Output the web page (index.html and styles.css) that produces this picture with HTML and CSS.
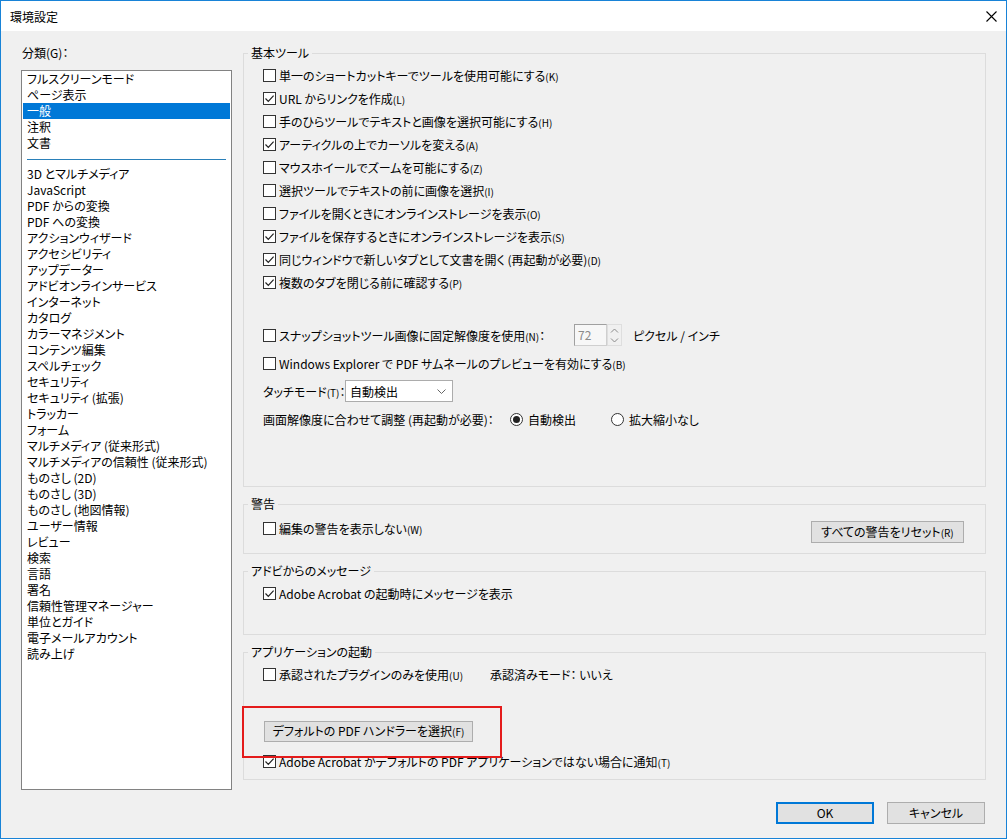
FILE: index.html
```html
<!DOCTYPE html>
<html lang="ja">
<head>
    <meta charset="UTF-8">
    <title>環境設定</title>
    <link rel="stylesheet" href="styles.css">
</head>
<body>
<div class="window">
    <div class="titlebar">
        <span class="title">環境設定</span>
        <svg class="close" width="11" height="11" viewBox="0 0 11 11"><path d="M0.5 0.5 L10.5 10.5 M10.5 0.5 L0.5 10.5" stroke="#000" stroke-width="1.1"/></svg>
    </div>
    <div class="content">
        <div class="sidebar">
            <div class="side-label">分類(G)：</div>
            <div class="listbox">
                <div class="item">フルスクリーンモード</div>
                <div class="item">ページ表示</div>
                <div class="item selected">一般</div>
                <div class="item">注釈</div>
                <div class="item">文書</div>
                <div class="separator"></div>
                <div class="item">3D とマルチメディア</div>
                <div class="item">JavaScript</div>
                <div class="item">PDF からの変換</div>
                <div class="item">PDF への変換</div>
                <div class="item">アクションウィザード</div>
                <div class="item">アクセシビリティ</div>
                <div class="item">アップデーター</div>
                <div class="item">アドビオンラインサービス</div>
                <div class="item">インターネット</div>
                <div class="item">カタログ</div>
                <div class="item">カラーマネジメント</div>
                <div class="item">コンテンツ編集</div>
                <div class="item">スペルチェック</div>
                <div class="item">セキュリティ</div>
                <div class="item">セキュリティ (拡張)</div>
                <div class="item">トラッカー</div>
                <div class="item">フォーム</div>
                <div class="item">マルチメディア (従来形式)</div>
                <div class="item">マルチメディアの信頼性 (従来形式)</div>
                <div class="item">ものさし (2D)</div>
                <div class="item">ものさし (3D)</div>
                <div class="item">ものさし (地図情報)</div>
                <div class="item">ユーザー情報</div>
                <div class="item">レビュー</div>
                <div class="item">検索</div>
                <div class="item">言語</div>
                <div class="item">署名</div>
                <div class="item">信頼性管理マネージャー</div>
                <div class="item">単位とガイド</div>
                <div class="item">電子メールアカウント</div>
                <div class="item">読み上げ</div>
            </div>
        </div>

        <div class="main">
            <div class="group group-basic">
                <div class="group-title">基本ツール</div>
                <div class="rows">
                    <div class="row"><span class="check"></span><span>単一のショートカットキーでツールを使用可能にする<small>(K)</small></span></div>
                    <div class="row"><span class="check on"><svg viewBox="0 0 11 11"><path d="M1.5 5.5 L4.3 8.4 L9.6 2.6" fill="none" stroke="#222" stroke-width="1.2"/></svg></span><span>URL からリンクを作成<small>(L)</small></span></div>
                    <div class="row"><span class="check"></span><span>手のひらツールでテキストと画像を選択可能にする<small>(H)</small></span></div>
                    <div class="row"><span class="check on"><svg viewBox="0 0 11 11"><path d="M1.5 5.5 L4.3 8.4 L9.6 2.6" fill="none" stroke="#222" stroke-width="1.2"/></svg></span><span>アーティクルの上でカーソルを変える<small>(A)</small></span></div>
                    <div class="row"><span class="check"></span><span>マウスホイールでズームを可能にする<small>(Z)</small></span></div>
                    <div class="row"><span class="check"></span><span>選択ツールでテキストの前に画像を選択<small>(I)</small></span></div>
                    <div class="row"><span class="check"></span><span>ファイルを開くときにオンラインストレージを表示<small>(O)</small></span></div>
                    <div class="row"><span class="check on"><svg viewBox="0 0 11 11"><path d="M1.5 5.5 L4.3 8.4 L9.6 2.6" fill="none" stroke="#222" stroke-width="1.2"/></svg></span><span>ファイルを保存するときにオンラインストレージを表示<small>(S)</small></span></div>
                    <div class="row"><span class="check on"><svg viewBox="0 0 11 11"><path d="M1.5 5.5 L4.3 8.4 L9.6 2.6" fill="none" stroke="#222" stroke-width="1.2"/></svg></span><span>同じウィンドウで新しいタブとして文書を開く (再起動が必要)<small>(D)</small></span></div>
                    <div class="row"><span class="check on"><svg viewBox="0 0 11 11"><path d="M1.5 5.5 L4.3 8.4 L9.6 2.6" fill="none" stroke="#222" stroke-width="1.2"/></svg></span><span>複数のタブを閉じる前に確認する<small>(P)</small></span></div>
                </div>
                <div class="rows rows-extra">
                    <div class="row tall">
                        <span class="check"></span>
                        <span class="snap-label">スナップショットツール画像に固定解像度を使用<small>(N)</small>：</span>
                        <span class="spin">
                            <span class="spin-value">72</span>
                            <span class="spin-buttons">
                                <svg width="9" height="5" viewBox="0 0 9 5"><path d="M1 4.5 L4.5 1 L8 4.5" fill="none" stroke="#8a8a8a"/></svg>
                                <svg width="9" height="5" viewBox="0 0 9 5"><path d="M1 0.5 L4.5 4 L8 0.5" fill="none" stroke="#8a8a8a"/></svg>
                            </span>
                        </span>
                        <span class="unit">ピクセル / インチ</span>
                    </div>
                    <div class="row tall"><span class="check"></span><span>Windows Explorer で PDF サムネールのプレビューを有効にする<small>(B)</small></span></div>
                    <div class="row tall">
                        <span class="touch-label">タッチモード<small>(T)</small>：</span>
                        <span class="combo">
                            <span class="combo-value">自動検出</span>
                            <svg width="9" height="5" viewBox="0 0 9 5"><path d="M0.5 0.5 L4.5 4.5 L8.5 0.5" fill="none" stroke="#666"/></svg>
                        </span>
                    </div>
                    <div class="row tall">
                        <span class="res-label">画面解像度に合わせて調整 (再起動が必要)：</span>
                        <span class="radio-option first"><span class="radio on"></span>自動検出</span>
                        <span class="radio-option"><span class="radio"></span>拡大縮小なし</span>
                    </div>
                </div>
            </div>

            <div class="group group-warn">
                <div class="group-title">警告</div>
                <div class="row-split">
                    <div class="row"><span class="check"></span><span>編集の警告を表示しない<small>(W)</small></span></div>
                    <button class="btn btn-reset">すべての警告をリセット<small>(R)</small></button>
                </div>
            </div>

            <div class="group group-msg">
                <div class="group-title">アドビからのメッセージ</div>
                <div class="rows">
                    <div class="row"><span class="check on"><svg viewBox="0 0 11 11"><path d="M1.5 5.5 L4.3 8.4 L9.6 2.6" fill="none" stroke="#222" stroke-width="1.2"/></svg></span><span>Adobe Acrobat の起動時にメッセージを表示</span></div>
                </div>
            </div>

            <div class="group group-app">
                <div class="group-title">アプリケーションの起動</div>
                <div class="rows">
                    <div class="row">
                        <span class="check"></span>
                        <span class="plugin-label">承認されたプラグインのみを使用<small>(U)</small></span>
                        <span>承認済みモード：&nbsp;いいえ</span>
                    </div>
                </div>
                <button class="btn btn-handler">デフォルトの PDF ハンドラーを選択<small>(F)</small></button>
                <div class="rows rows-notify">
                    <div class="row"><span class="check on"><svg viewBox="0 0 11 11"><path d="M1.5 5.5 L4.3 8.4 L9.6 2.6" fill="none" stroke="#222" stroke-width="1.2"/></svg></span><span>Adobe Acrobat がデフォルトの PDF アプリケーションではない場合に通知<small>(T)</small></span></div>
                </div>
                <div class="highlight"></div>
            </div>

            <div class="footer">
                <button class="btn btn-ok">OK</button>
                <button class="btn btn-cancel">キャンセル</button>
            </div>
        </div>
    </div>
</div>
</body>
</html>
```

FILE: styles.css
```css
:root {
    --face: #f0f0f0;
    --group-line: #dcdcdc;
    --accent: #0078d7;
    --button: #e1e1e1;
    --button-border: #adadad;
}

body {
    margin: 0;
    font-family: "Noto Sans CJK JP", "Noto Sans", sans-serif;
    font-size: 12px;
    font-feature-settings: "palt";
    color: #000;
}

.window {
    width: 1007px;
    height: 839px;
    box-sizing: border-box;
    border: 1px solid #1883d7;
    background: var(--face);
    display: flex;
    flex-direction: column;
}

small {
    font-size: 10px;
}

.titlebar {
    height: 30px;
    flex-shrink: 0;
    background: #fff;
    display: flex;
    align-items: center;
    justify-content: space-between;
    padding: 0 9px 0 9px;
}

.title {
    font-size: 12px;
}

.close {
    display: block;
}

.content {
    flex: 1;
    display: flex;
    padding: 0 20px 0 20px;
}

.sidebar {
    width: 211px;
    padding-top: 14px;
}

.side-label {
    line-height: 16px;
    padding-left: 1px;
    margin-bottom: 9px;
}

.listbox {
    height: 720px;
    box-sizing: border-box;
    border: 1px solid #828282;
    background: #fff;
    padding: 0 1px;
}

.item {
    height: 16px;
    line-height: 16px;
    padding-left: 4px;
    white-space: nowrap;
}

.item.selected {
    background: var(--accent);
    color: #fff;
}

.separator {
    height: 1px;
    background: #2a80b9;
    margin: 8px 4px 6px 4px;
}

.main {
    flex: 1;
    margin-left: 11px;
    padding-top: 22px;
    display: flex;
    flex-direction: column;
}

.group {
    position: relative;
    border: 1px solid var(--group-line);
    box-sizing: border-box;
    padding: 0 0 0 19px;
    margin-bottom: 17px;
    display: flex;
    flex-direction: column;
}

.group-title {
    align-self: flex-start;
    line-height: 16px;
    margin: -9px 0 0 -15px;
    padding: 0 3px;
    background: var(--face);
}

.group-basic { height: 434px; }
.group-warn { height: 50px; }
.group-msg { height: 64px; }
.group-app { height: 128px; margin-bottom: 0; }

.rows {
    margin-top: 3px;
}

.row {
    height: 23px;
    display: flex;
    align-items: center;
    white-space: nowrap;
}

.row.tall {
    height: 28px;
}

.rows-extra {
    margin-top: 27px;
}

.check {
    width: 13px;
    height: 13px;
    box-sizing: border-box;
    border: 1px solid #333;
    background: #fff;
    margin-right: 3px;
    flex-shrink: 0;
    display: flex;
    align-items: center;
    justify-content: center;
}

.check svg {
    width: 11px;
    height: 11px;
}

.snap-label {
    width: 295px;
}

.spin {
    display: flex;
    align-items: stretch;
    height: 22px;
}

.spin-value {
    width: 33px;
    box-sizing: border-box;
    border: 1px solid #cfcfcf;
    border-left-color: #a0a0a0;
    border-top-color: #a0a0a0;
    background: #f7f7f7;
    color: #8a8a8a;
    padding-left: 3px;
    line-height: 20px;
}

.spin-buttons {
    width: 15px;
    display: flex;
    flex-direction: column;
    align-items: center;
    justify-content: space-around;
    border: 1px solid #dedede;
    box-sizing: border-box;
}

.unit {
    margin-left: 11px;
}

.touch-label {
    width: 84px;
}

.combo {
    width: 108px;
    height: 22px;
    box-sizing: border-box;
    border: 1px solid #acacac;
    background: #fff;
    display: flex;
    align-items: center;
    justify-content: space-between;
    padding: 0 6px 0 4px;
    margin-left: -2px;
}

.res-label {
    width: 247px;
}

.radio-option {
    display: flex;
    align-items: center;
    width: 101px;
}

.radio {
    width: 13px;
    height: 13px;
    box-sizing: border-box;
    border: 1px solid #333;
    border-radius: 50%;
    background: #fff;
    margin-right: 5px;
    display: flex;
    align-items: center;
    justify-content: center;
}

.radio.on::after {
    content: "";
    width: 7px;
    height: 7px;
    border-radius: 50%;
    background: #222;
}

.btn {
    font-family: inherit;
    font-size: 12px;
    font-feature-settings: "palt";
    color: #000;
    background: var(--button);
    border: 1px solid var(--button-border);
    padding: 0;
    height: 22px;
    line-height: 18px;
}

.group-warn .row-split {
    display: flex;
    justify-content: space-between;
    align-items: flex-start;
    padding-right: 21px;
    margin-top: 5px;
}

.btn-reset {
    width: 153px;
    margin-top: 4px;
}

.plugin-label {
    width: 211px;
}

.btn-handler {
    align-self: flex-start;
    width: 209px;
    height: 21px;
    margin: 35px 0 0 1px;
}

.rows-notify {
    margin-top: 8px;
}

.highlight {
    position: absolute;
    left: -2px;
    top: 53px;
    width: 260px;
    height: 52px;
    box-sizing: border-box;
    border: 2px solid #e41b1b;
}

.footer {
    display: flex;
    justify-content: flex-end;
    gap: 13px;
    margin-top: 22px;
    padding-right: 1px;
}

.btn-ok, .btn-cancel {
    width: 98px;
    height: 22px;
}

.btn-ok {
    border: 2px solid var(--accent);
}
```
